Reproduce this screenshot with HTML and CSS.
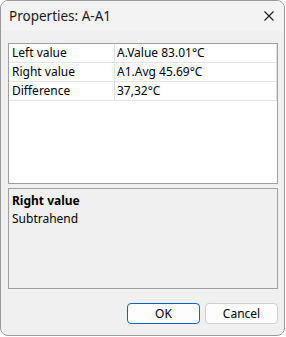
FILE: index.html
```html
<!DOCTYPE html>
<html>
<head>
  <meta charset="utf-8">
  <title>Properties: A-A1</title>
<link rel="stylesheet" href="styles.css">
</head>
<body>
<div class="window">
  <div class="titlebar">
    <div class="title-text">Properties: A-A1</div>
    <svg class="title-close" width="10" height="10" viewBox="0 0 10 10">
      <path d="M0.5 0.5 L9.5 9.5 M9.5 0.5 L0.5 9.5" stroke="#1a1a1a" stroke-width="1.1" fill="none"/>
    </svg>
  </div>
  <div class="dialog-body">
    <div class="prop-list">
      <div class="prop-row">
        <div class="prop-name">Left value</div>
        <div class="prop-value">A.Value 83.01°C</div>
      </div>
      <div class="prop-row">
        <div class="prop-name">Right value</div>
        <div class="prop-value">A1.Avg 45.69°C</div>
      </div>
      <div class="prop-row">
        <div class="prop-name">Difference</div>
        <div class="prop-value">37,32°C</div>
      </div>
    </div>
    <div class="prop-desc">
      <div class="desc-title">Right value</div>
      <div class="desc-text">Subtrahend</div>
    </div>
    <div class="buttons">
      <button class="btn btn-default">OK</button>
      <button class="btn">Cancel</button>
    </div>
  </div>
</div>
</body>
</html>
```

FILE: styles.css
```css
body {
  margin: 0;
  padding: 0;
  background: #ffffff;
  font-family: 'Noto Sans', 'Open Sans', sans-serif;
  font-size: 12px;
  color: #000000;
}

.window {
  width: 283px;
  height: 334px;
  border: 1px solid #9a9a9a;
  border-radius: 8px;
  background: #f0f0f0;
  display: flex;
  flex-direction: column;
  overflow: hidden;
}

.titlebar {
  height: 30px;
  background: #f3f3f3;
  display: flex;
  align-items: center;
  justify-content: space-between;
  padding: 0 9px 0 8px;
}

.title-text {
  font-size: 13.5px;
  color: #1a1a1a;
}

.title-close {
  display: block;
  margin-right: 1px;
}

.dialog-body {
  flex: 1;
  display: flex;
  flex-direction: column;
  padding: 12px 6px 11px 7px;
}

/* property grid */
.prop-list {
  height: 139px;
  border: 1px solid #a0a0a0;
  background: #ffffff;
}

.prop-row {
  display: flex;
  height: 18px;
  border-bottom: 1px solid #e3e3e3;
  border-right: 1px solid #e3e3e3;
}

.prop-name {
  width: 102px;
  padding-left: 3px;
  border-right: 1px solid #e3e3e3;
  line-height: 18px;
}

.prop-value {
  flex: 1;
  padding-left: 2px;
  line-height: 18px;
}

/* description pane */
.prop-desc {
  margin-top: 4px;
  height: 99px;
  border: 1px solid #a0a0a0;
  padding: 0 3px;
}

.desc-title {
  font-weight: bold;
  margin-top: 3px;
  line-height: 18px;
}

.desc-text {
  line-height: 18px;
}

.buttons {
  margin-top: auto;
  display: flex;
  justify-content: flex-end;
  gap: 5px;
}

.btn {
  width: 73px;
  height: 21px;
  padding: 0;
  font-family: 'Noto Sans', 'Open Sans', sans-serif;
  font-size: 12px;
  color: #000000;
  background: #fdfdfd;
  border: 1px solid #d0d0d0;
  border-radius: 4px;
}

.btn-default {
  border-color: #0067c0;
}
```
